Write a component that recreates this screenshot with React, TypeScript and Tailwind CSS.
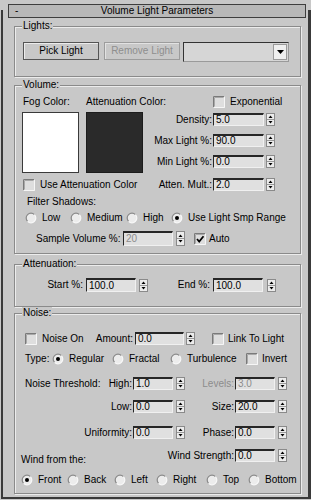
import React from "react";

function Spinner({ cls = "ml-[3px]", tall = false }: { cls?: string; tall?: boolean }) {
  const h = tall ? 15 : 13;
  const mid = h / 2;
  return (
    <svg width="9" height={h} className={`shrink-0 ${cls}`}>
      <rect x="0.5" y="0.5" width="8" height={h - 1} fill="#ececec" stroke="#8a8a8a" />
      <line x1="1" y1={mid} x2="8" y2={mid} stroke="#9a9a9a" />
      <polygon points={`2.5,${mid - 1.5} 6.5,${mid - 1.5} 4.5,${mid - 4}`} fill="#000" />
      <polygon points={`2.5,${mid + 1.5} 6.5,${mid + 1.5} 4.5,${mid + 4}`} fill="#000" />
    </svg>
  );
}

function Field({ v, cls, dis = false }: { v: string; cls: string; dis?: boolean }) {
  return (
    <div
      className={`flex items-center shrink-0 border-t-2 border-l border-r border-b border-[#262626] border-r-[#f0f0f0] border-b-[#f0f0f0] bg-[#e0e0e0] pl-[2px] leading-[10px] ${
        dis ? "text-[#8c8c8c]" : "text-black"
      } ${cls}`}
    >
      {v}
    </div>
  );
}

function Check({ on = false, cls = "" }: { on?: boolean; cls?: string }) {
  return (
    <svg width="12" height="12" className={`shrink-0 ${cls}`}>
      <rect x="0" y="0" width="12" height="12" fill="#dedede" />
      <path d="M0.5 11.5 V0.5 H11.5" stroke="#7a7a7a" fill="none" />
      <path d="M1.5 10.5 V1.5 H10.5" stroke="#a8a8a8" fill="none" />
      <path d="M0.5 11.5 H11.5 V0.5" stroke="#f6f6f6" fill="none" />
      {on && <path d="M3 6 L5.2 8.6 L9.5 3.2" stroke="#000" strokeWidth="1.7" fill="none" />}
    </svg>
  );
}

function Radio({ on = false }: { on?: boolean }) {
  return (
    <svg width="12" height="12" className="shrink-0">
      <circle cx="6" cy="6" r="4.8" fill="#ececec" />
      <path d="M9.4 2.6 A4.8 4.8 0 0 0 2.6 9.4" stroke="#8a8a8a" fill="none" strokeWidth="1.2" />
      <path d="M2.6 9.4 A4.8 4.8 0 0 0 9.4 2.6" stroke="#f8f8f8" fill="none" strokeWidth="1.2" />
      {on && <circle cx="6" cy="6" r="2" fill="#000" />}
    </svg>
  );
}

function RItem({ label, on = false, cls }: { label: string; on?: boolean; cls: string }) {
  return (
    <div className={`flex items-center shrink-0 whitespace-nowrap ${cls}`}>
      <Radio on={on} />
      <span className="ml-[5px]">{label}</span>
    </div>
  );
}

function Group({ label, cls, children }: { label: string; cls: string; children?: React.ReactNode }) {
  return (
    <div
      className={`relative ml-[11px] w-[287px] shrink-0 border border-[#8a8a8a] shadow-[inset_1px_1px_0_#ececec,1px_1px_0_#ececec] ${cls}`}
    >
      <span className="absolute -top-[7px] left-[7px] px-[1px] bg-[#c8c8c8] leading-[12px] whitespace-nowrap">
        {label}
      </span>
      {children}
    </div>
  );
}

export default function App() {
  return (
    <div className="w-[311px] h-[500px] bg-[#c8c8c8] overflow-hidden text-[10px] leading-[12px] text-black font-['Liberation_Sans',Arial,sans-serif]">
      <div className="mt-[10px] ml-[1px] w-[310px] h-[489px] border-l-2 border-r-[3px] border-b-2 border-[#3a3a3a] flex flex-col">
        {/* Title bar */}
        <div className="-mt-[6px] ml-[5px] w-[298px] h-[14px] shrink-0 border border-[#3e3e3e] bg-[#b8b8b8] flex items-center">
          <span className="w-[16px] pl-[6px]">-</span>
          <span className="flex-1 text-center">Volume Light Parameters</span>
          <span className="w-[16px]" />
        </div>

        {/* Lights */}
        <Group label="Lights:" cls="mt-[8px] h-[51px]">
          <div className="flex items-start pt-[15px] pl-[8px]">
            <div className="w-[76px] h-[18px] border border-[#555555] bg-[#c8c8c8] shadow-[inset_1px_1px_0_#ececec] flex items-center justify-center">
              Pick Light
            </div>
            <div className="ml-[5px] w-[76px] h-[18px] border border-[#9c9c9c] bg-[#c8c8c8] shadow-[inset_1px_1px_0_#e2e2e2] flex items-center justify-center text-[#8e8e8e]">
              Remove Light
            </div>
            <div className="ml-[3px] w-[106px] h-[20px] border border-[#9a9a9a] border-t-[#333333] border-l-[#333333] bg-[#d6d6d6] flex items-center justify-end pr-[1px]">
              <div className="w-[14px] h-[16px] bg-[#efefef] border border-[#9a9a9a] flex items-center justify-center">
                <svg width="7" height="4">
                  <polygon points="0,0 7,0 3.5,4" fill="#000" />
                </svg>
              </div>
            </div>
          </div>
        </Group>

        {/* Volume */}
        <Group label="Volume:" cls="mt-[8px] h-[169px]">
          <div className="pt-[10px]">
            <div className="flex">
              <div className="ml-[7px] w-[121px] shrink-0">
                <div className="flex h-[12px] whitespace-nowrap">
                  <span className="w-[64px] pl-[1px] shrink-0">Fog Color:</span>
                  <span>Attenuation Color:</span>
                </div>
                <div className="flex mt-[4px]">
                  <div className="w-[57px] h-[61px] border border-[#3a3a3a] bg-white" />
                  <div className="ml-[7px] w-[57px] h-[61px] border border-[#1c1c1c] bg-[#2a2a2a]" />
                </div>
              </div>
              <div className="flex flex-col">
                <div className="flex items-center h-[12px]">
                  <span className="w-[70px] shrink-0" />
                  <Check />
                  <span className="ml-[5px]">Exponential</span>
                </div>
                <div className="flex items-center h-[13px] mt-[5px]">
                  <span className="w-[70px] shrink-0 text-right pr-[1px]">Density:</span>
                  <Field v="5.0" cls="w-[51px] h-[13px]" />
                  <Spinner cls="ml-[2px]" />
                </div>
                <div className="flex items-center h-[13px] mt-[8px]">
                  <span className="w-[70px] shrink-0 text-right pr-[1px]">Max Light %:</span>
                  <Field v="90.0" cls="w-[51px] h-[13px]" />
                  <Spinner cls="ml-[2px]" />
                </div>
                <div className="flex items-center h-[13px] mt-[8px]">
                  <span className="w-[70px] shrink-0 text-right pr-[1px]">Min Light %:</span>
                  <Field v="0.0" cls="w-[51px] h-[13px]" />
                  <Spinner cls="ml-[2px]" />
                </div>
              </div>
            </div>
            <div className="flex items-center h-[13px] mt-[5px]">
              <div className="w-[128px] shrink-0 flex items-center pl-[8px] whitespace-nowrap">
                <Check />
                <span className="ml-[5px]">Use Attenuation Color</span>
              </div>
              <span className="w-[70px] shrink-0 text-right pr-[1px]">Atten. Mult.:</span>
              <Field v="2.0" cls="w-[51px] h-[13px]" />
              <Spinner cls="ml-[2px]" />
            </div>
            <div className="mt-[5px] pl-[12px] h-[12px]">Filter Shadows:</div>
            <div className="flex items-center h-[12px] mt-[4px] pl-[10px]">
              <RItem label="Low" cls="w-[45px]" />
              <RItem label="Medium" cls="w-[56px]" />
              <RItem label="High" cls="w-[45px]" />
              <RItem label="Use Light Smp Range" on cls="" />
            </div>
            <div className="flex items-center h-[15px] mt-[7px]">
              <span className="w-[108px] shrink-0 pl-[21px] whitespace-nowrap">Sample Volume %:</span>
              <Field v="20" dis cls="w-[50px] h-[15px]" />
              <Spinner tall cls="ml-[3px]" />
              <Check on cls="ml-[9px]" />
              <span className="ml-[3px]">Auto</span>
            </div>
          </div>
        </Group>

        {/* Attenuation */}
        <Group label="Attenuation:" cls="mt-[10px] h-[43px]">
          <div className="flex items-center h-[14px] mt-[13px]">
            <span className="w-[71px] shrink-0 text-right pr-[3px]">Start %:</span>
            <Field v="100.0" cls="w-[50px] h-[14px]" />
            <Spinner cls="ml-[3px]" />
            <span className="w-[65px] shrink-0 text-right pr-[3px]">End %:</span>
            <Field v="100.0" cls="w-[50px] h-[14px]" />
            <Spinner cls="ml-[4px]" />
          </div>
        </Group>

        {/* Noise */}
        <Group label="Noise:" cls="mt-[6px] h-[181px]">
          <div className="flex items-center h-[13px] mt-[18px] whitespace-nowrap">
            <div className="flex items-center w-[120px] shrink-0 pl-[10px]">
              <Check />
              <span className="ml-[5px]">Noise On</span>
              <span className="ml-auto pr-[2px]">Amount:</span>
            </div>
            <Field v="0.0" cls="w-[49px] h-[13px]" />
            <Spinner cls="ml-[2px]" />
            <Check cls="ml-[17px]" />
            <span className="ml-[4px]">Link To Light</span>
          </div>
          <div className="flex items-center h-[12px] mt-[8px] whitespace-nowrap">
            <span className="w-[37px] shrink-0 pl-[10px]">Type:</span>
            <RItem label="Regular" on cls="w-[60px]" />
            <RItem label="Fractal" cls="w-[58px]" />
            <RItem label="Turbulence" cls="w-[75px]" />
            <Check cls="ml-[1px]" />
            <span className="ml-[4px]">Invert</span>
          </div>
          <div className="flex items-center h-[13px] mt-[12px] whitespace-nowrap">
            <div className="w-[118px] shrink-0 flex justify-between pl-[10px] pr-[1px]">
              <span>Noise Threshold:</span>
              <span>High:</span>
            </div>
            <Field v="1.0" cls="w-[40px] h-[13px]" />
            <Spinner cls="ml-[3px]" />
            <span className="w-[50px] shrink-0 text-right pr-[1px] text-[#8c8c8c]">Levels:</span>
            <Field v="3.0" dis cls="w-[40px] h-[13px]" />
            <Spinner cls="ml-[3px]" />
          </div>
          <div className="flex items-center h-[13px] mt-[10px] whitespace-nowrap">
            <span className="w-[118px] shrink-0 text-right pr-[1px]">Low:</span>
            <Field v="0.0" cls="w-[40px] h-[13px]" />
            <Spinner cls="ml-[3px]" />
            <span className="w-[50px] shrink-0 text-right pr-[1px]">Size:</span>
            <Field v="20.0" cls="w-[40px] h-[13px]" />
            <Spinner cls="ml-[3px]" />
          </div>
          <div className="flex items-center h-[13px] mt-[13px] whitespace-nowrap">
            <span className="w-[118px] shrink-0 text-right pr-[1px]">Uniformity:</span>
            <Field v="0.0" cls="w-[40px] h-[13px]" />
            <Spinner cls="ml-[3px]" />
            <span className="w-[50px] shrink-0 text-right pr-[1px]">Phase:</span>
            <Field v="0.0" cls="w-[40px] h-[13px]" />
            <Spinner cls="ml-[3px]" />
          </div>
          <div className="flex items-start mt-[10px] pr-[13px] whitespace-nowrap">
            <span className="flex-1 pl-[6px] mt-[5px]">Wind from the:</span>
            <div className="flex items-center h-[13px]">
              <span className="pr-[1px]">Wind Strength:</span>
              <Field v="0.0" cls="w-[40px] h-[13px]" />
              <Spinner cls="ml-[3px]" />
            </div>
          </div>
          <div className="flex items-center h-[12px] mt-[8px] pl-[6px] whitespace-nowrap">
            <RItem label="Front" on cls="w-[46px]" />
            <RItem label="Back" cls="w-[47px]" />
            <RItem label="Left" cls="w-[42px]" />
            <RItem label="Right" cls="w-[50px]" />
            <RItem label="Top" cls="w-[42px]" />
            <RItem label="Bottom" cls="" />
          </div>
        </Group>
      </div>
    </div>
  );
}
